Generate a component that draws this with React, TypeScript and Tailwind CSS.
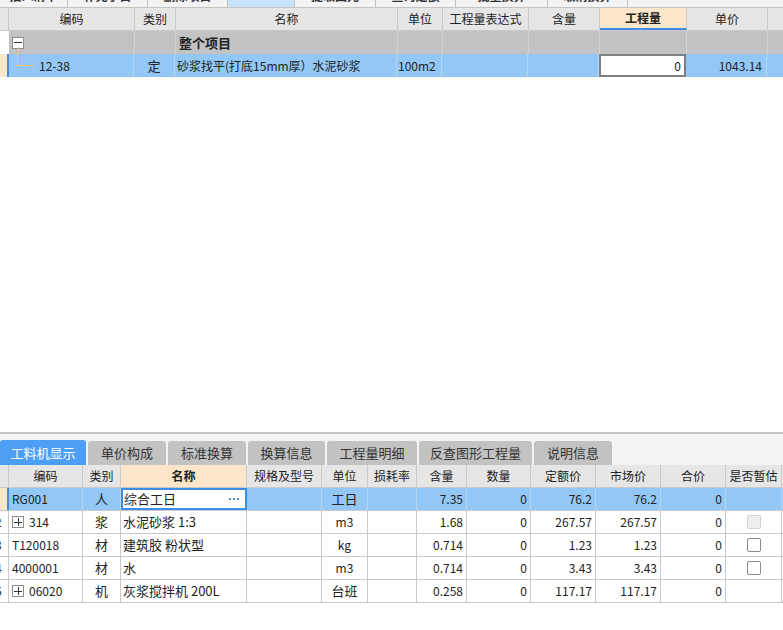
import React from 'react';

const bd = 'border-r border-[#c9c9c9]';

function MinusBox() {
    return (
        <span className="relative inline-flex h-[12px] w-[12px] items-center justify-center border border-[#8c8c8c] bg-white">
            <span className="h-px w-[8px] bg-[#333]" />
        </span>
    );
}

function PlusBox() {
    return (
        <span className="relative inline-flex h-[12px] w-[12px] items-center justify-center border border-[#8c8c8c] bg-white">
            <span className="absolute h-px w-[8px] bg-[#333]" />
            <span className="absolute h-[8px] w-px bg-[#333]" />
        </span>
    );
}

function Check({ disabled }: { disabled?: boolean }) {
    return disabled ? (
        <span className="h-[14px] w-[14px] rounded-[2px] border border-[#d2d2d2] bg-[#efefef]" />
    ) : (
        <span className="h-[14px] w-[14px] rounded-[2px] border border-[#8a8a8a] bg-white" />
    );
}

function TopStrip() {
    const segs = [
        { w: 'w-[68px]', t: '插入清单' },
        { w: 'w-[80px]', t: '补充子目' },
        { w: 'w-[80px]', t: '删除项目' },
        { w: 'w-[67px]', t: '', on: true },
        { w: 'w-[81px]', t: '提取图元' },
        { w: 'w-[80px]', t: '查询定额' },
        { w: 'w-[92px]', t: '批量换算' },
        { w: 'w-[80px]', t: '取消换算' },
    ];
    return (
        <div className="flex h-[8px] overflow-hidden border-b border-[#c4c4c4] bg-[#f3f3f3]">
            {segs.map((s, i) => (
                <div key={i} className={`${s.w} shrink-0 overflow-hidden border-r border-[#c4c4c4] ${s.on ? 'bg-[#c8e3fb]' : ''}`}>
                    <div className="-mt-[11px] text-center text-[12px] font-bold leading-[14px] text-[#333]">{s.t}</div>
                </div>
            ))}
            <div className="flex-1" />
        </div>
    );
}

function TopGrid() {
    const hc = 'flex items-center justify-center border-r border-[#c9c9c9]';
    const gc = 'border-r border-[#d3d3d3]';
    const bc = 'border-r border-[#b7d5f0]';
    return (
        <div className="text-[12px] text-[#222]">
            <div className="flex h-[23px] border-b border-[#c9c9c9] bg-[#e6e6e6]">
                <div className={`w-[9px] ${bd}`} />
                <div className={`w-[126px] ${hc}`}>编码</div>
                <div className={`w-[41px] ${hc}`}>类别</div>
                <div className={`w-[222px] ${hc}`}>名称</div>
                <div className={`w-[45px] ${hc}`}>单位</div>
                <div className={`w-[86px] ${hc}`}>工程量表达式</div>
                <div className={`w-[71px] ${hc}`}>含量</div>
                <div className="flex w-[87px] items-center justify-center border-r border-b-2 border-[#c9c9c9] border-b-[#3b8de8] bg-[#fde6c9] font-bold">工程量</div>
                <div className={`w-[81px] ${hc}`}>单价</div>
                <div className="flex-1" />
            </div>

            <div className="flex h-[23px] bg-[#c3c3c3]">
                <div className="w-[9px] bg-white" />
                <div className={`relative flex w-[126px] items-center pl-[3px] ${gc}`}>
                    <MinusBox />
                    <span className="absolute left-[9px] top-[16px] h-[7px] w-px bg-[#f6c27c]" />
                </div>
                <div className={`w-[41px] ${gc}`} />
                <div className={`flex w-[222px] items-center pl-[3px] text-[13px] font-bold ${gc}`}>整个项目</div>
                <div className={`w-[45px] ${gc}`} />
                <div className={`w-[86px] ${gc}`} />
                <div className={`w-[71px] ${gc}`} />
                <div className={`w-[87px] ${gc}`} />
                <div className={`w-[81px] ${gc}`} />
                <div className="flex-1" />
            </div>

            <div className="flex h-[23px] bg-[#93c7f6]">
                <div className="w-[9px] border-r-2 border-[#3b8de8] bg-[#fde6c9]" />
                <div className={`relative flex w-[125px] items-center pl-[30px] ${bc}`}>
                    <span className="absolute left-[8px] top-0 h-[11px] w-px bg-[#f6c27c]" />
                    <span className="absolute left-[8px] top-[11px] h-px w-[17px] bg-[#f6c27c]" />
                    12-38
                </div>
                <div className={`flex w-[41px] items-center justify-center text-[13px] ${bc}`}>定</div>
                <div className={`flex w-[222px] items-center pl-[2px] ${bc}`}>砂浆找平(打底15mm厚）水泥砂浆</div>
                <div className={`flex w-[45px] items-center pl-[1px] ${bc}`}>100m2</div>
                <div className={`w-[86px] ${bc}`} />
                <div className={`w-[71px] ${bc}`} />
                <div className="flex w-[87px] items-center justify-end border-2 border-[#7f7f7f] bg-white pr-[3px]">0</div>
                <div className={`flex w-[81px] items-center justify-end pr-[4px] ${bc}`}>1043.14</div>
                <div className="flex-1" />
            </div>
        </div>
    );
}

const tabs = ['单价构成', '标准换算', '换算信息', '工程量明细', '反查图形工程量', '说明信息'];
const tabW = ['w-[78px]', 'w-[78px]', 'w-[77px]', 'w-[90px]', 'w-[113px]', 'w-[78px]'];

type Row = {
    idx: string;
    code: string;
    plus?: boolean;
    kind: string;
    name: string;
    unit: string;
    qty: string;
    price: string;
    check?: 'on' | 'off';
};

const rows: Row[] = [
    { idx: '2', code: '314', plus: true, kind: '浆', name: '水泥砂浆 1:3', unit: 'm3', qty: '1.68', price: '267.57', check: 'off' },
    { idx: '3', code: 'T120018', kind: '材', name: '建筑胶 粉状型', unit: 'kg', qty: '0.714', price: '1.23', check: 'on' },
    { idx: '4', code: '4000001', kind: '材', name: '水', unit: 'm3', qty: '0.714', price: '3.43', check: 'on' },
    { idx: '5', code: '06020', plus: true, kind: '机', name: '灰浆搅拌机 200L', unit: '台班', qty: '0.258', price: '117.17' },
];

function BottomGrid() {
    const hc = 'flex items-center justify-center border-r border-[#c9c9c9]';
    const c = 'flex items-center border-r border-[#c9c9c9]';
    const bc = 'flex items-center border-r border-[#b7d5f0]';
    return (
        <div className="text-[12px] text-[#222]">
            <div className="flex h-[23px] border-b border-[#c9c9c9] bg-[#e6e6e6]">
                <div className={`w-[9px] ${bd}`} />
                <div className={`w-[74px] ${hc}`}>编码</div>
                <div className={`w-[38px] ${hc}`}>类别</div>
                <div className={`w-[126px] bg-[#fde6c9] font-bold ${hc}`}>名称</div>
                <div className={`w-[75px] ${hc}`}>规格及型号</div>
                <div className={`w-[46px] ${hc}`}>单位</div>
                <div className={`w-[49px] ${hc}`}>损耗率</div>
                <div className={`w-[50px] ${hc}`}>含量</div>
                <div className={`w-[64px] ${hc}`}>数量</div>
                <div className={`w-[65px] ${hc}`}>定额价</div>
                <div className={`w-[65px] ${hc}`}>市场价</div>
                <div className={`w-[65px] ${hc}`}>合价</div>
                <div className={`w-[56px] ${hc}`}>是否暂估</div>
            </div>

            <div className="flex h-[23px] border-b border-[#c9c9c9] bg-[#93c7f6]">
                <div className="w-[9px] border-r-2 border-[#3b8de8] bg-[#fde6c9]" />
                <div className={`w-[74px] pl-[3px] ${bc}`}>RG001</div>
                <div className={`w-[38px] justify-center text-[13px] ${bc}`}>人</div>
                <div className="flex w-[126px] items-center justify-between border-2 border-[#3b8de8] bg-white pl-[1px] pr-[6px] text-[13px]">
                    <span>综合工日</span>
                    <span className="flex gap-[2px]">
                        <span className="h-[2px] w-[2px] bg-[#4a90d9]" />
                        <span className="h-[2px] w-[2px] bg-[#4a90d9]" />
                        <span className="h-[2px] w-[2px] bg-[#4a90d9]" />
                    </span>
                </div>
                <div className={`w-[75px] ${bc}`} />
                <div className={`w-[46px] justify-center text-[13px] ${bc}`}>工日</div>
                <div className={`w-[49px] ${bc}`} />
                <div className={`w-[50px] justify-end pr-[3px] ${bc}`}>7.35</div>
                <div className={`w-[64px] justify-end pr-[3px] ${bc}`}>0</div>
                <div className={`w-[65px] justify-end pr-[3px] ${bc}`}>76.2</div>
                <div className={`w-[65px] justify-end pr-[3px] ${bc}`}>76.2</div>
                <div className={`w-[65px] justify-end pr-[3px] ${bc}`}>0</div>
                <div className={`w-[56px] ${bc}`} />
            </div>

            {rows.map((r) => (
                <div key={r.code} className="flex h-[23px] border-b border-[#c9c9c9] bg-white">
                    <div className={`w-[9px] overflow-hidden ${c}`}>
                        <span className="-ml-[5px]">{r.idx}</span>
                    </div>
                    <div className={`w-[74px] gap-[5px] pl-[3px] ${c}`}>
                        {r.plus ? <PlusBox /> : null}
                        <span>{r.code}</span>
                    </div>
                    <div className={`w-[38px] justify-center text-[13px] ${c}`}>{r.kind}</div>
                    <div className={`w-[126px] pl-[2px] text-[13px] ${c}`}>{r.name}</div>
                    <div className={`w-[75px] ${c}`} />
                    <div className={`w-[46px] justify-center ${r.unit === '台班' ? 'text-[13px]' : ''} ${c}`}>{r.unit}</div>
                    <div className={`w-[49px] ${c}`} />
                    <div className={`w-[50px] justify-end pr-[3px] ${c}`}>{r.qty}</div>
                    <div className={`w-[64px] justify-end pr-[3px] ${c}`}>0</div>
                    <div className={`w-[65px] justify-end pr-[3px] ${c}`}>{r.price}</div>
                    <div className={`w-[65px] justify-end pr-[3px] ${c}`}>{r.price}</div>
                    <div className={`w-[65px] justify-end pr-[3px] ${c}`}>0</div>
                    <div className={`w-[56px] justify-center ${c}`}>
                        {r.check ? <Check disabled={r.check === 'off'} /> : null}
                    </div>
                </div>
            ))}
        </div>
    );
}

export default function App() {
    return (
        <div className="flex h-[630px] w-[783px] flex-col overflow-hidden bg-white font-['Noto_Sans_CJK_SC','Liberation_Sans',sans-serif]">
            <div className="h-[432px] shrink-0">
                <TopStrip />
                <TopGrid />
            </div>

            <div className="h-[2px] bg-[#c4c4c4]" />
            <div className="bg-[#f3f3f3] pt-[6px]">
                <div className="flex h-[25px] items-end gap-[2px]">
                    <div className="flex h-[25px] w-[86px] items-center justify-center rounded-t-[3px] bg-[#4d9ff5] text-[13px] text-white">工料机显示</div>
                    {tabs.map((t, i) => (
                        <div key={t} className={`flex h-[24px] ${tabW[i]} items-center justify-center rounded-t-[3px] bg-[#c2c2c2] text-[13px] text-[#333]`}>{t}</div>
                    ))}
                </div>
            </div>
            <BottomGrid />
            <div className="flex-1 bg-white" />
        </div>
    );
}
